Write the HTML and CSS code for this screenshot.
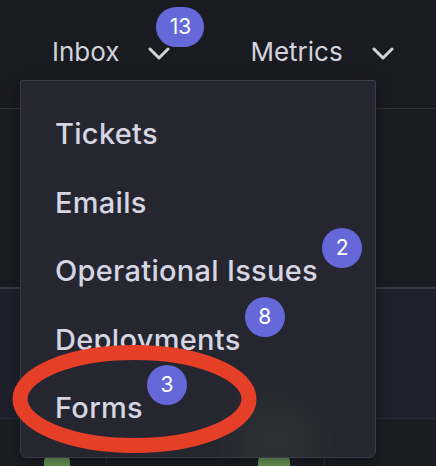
FILE: index.html
```html
<!DOCTYPE html>
<html lang="en">
  <head>
    <meta charset="UTF-8" />
    <meta name="viewport" content="width=device-width, initial-scale=1.0" />
    <title>Inbox Menu</title>
    <link rel="stylesheet" href="styles.css">
  </head>
  <body>
    <div class="page">
      <header class="topbar">
        <nav class="nav">
          <div class="nav-item">
            <span>Inbox</span>
            <span class="chevron-wrap">
              <svg class="chevron" width="22" height="14" viewBox="0 0 22 14"><path d="M2 2 L11 11 L20 2" /></svg>
              <span class="badge badge-wide">13</span>
            </span>
          </div>
          <div class="nav-item">
            <span>Metrics</span>
            <span class="chevron-wrap">
              <svg class="chevron" width="22" height="14" viewBox="0 0 22 14"><path d="M2 2 L11 11 L20 2" /></svg>
            </span>
          </div>
        </nav>
      </header>
      <section class="panel panel-top"></section>
      <section class="panel panel-mid"></section>
      <section class="chart-row">
        <div class="chart-col"><div class="bar bar-left"></div></div>
        <div class="chart-col"><div class="bar bar-right"></div></div>
        <div class="chart-col"></div>
      </section>

      <div class="dropdown">
        <ul class="menu">
          <li><span class="label">Tickets</span></li>
          <li><span class="label">Emails</span></li>
          <li><span class="label">Operational Issues<span class="badge">2</span></span></li>
          <li><span class="label">Deployments<span class="badge">8</span></span></li>
          <li><span class="label">Forms<span class="badge">3</span></span></li>
        </ul>
      </div>

      <svg class="annotation" width="436" height="466" viewBox="0 0 436 466">
        <ellipse cx="134.5" cy="399" rx="114.5" ry="46.5" />
      </svg>
    </div>
  </body>
</html>
```

FILE: styles.css
```css
body {
  margin: 0;
  padding: 0;
  background-color: #1a1a21;
  font-family: "Inter", "Noto Sans", sans-serif;
  color: #d5d5e0;
}
.page {
  position: relative;
  width: 436px;
  height: 466px;
  overflow: hidden;
}
.topbar {
  height: 108px;
  background-color: #1a1a21;
  border-bottom: 1px solid #32322e;
}
.nav {
  display: flex;
  align-items: center;
  gap: 80px;
  padding: 37px 0 0 52px;
}
.nav-item {
  display: flex;
  align-items: center;
  gap: 29px;
  font-size: 26px;
  line-height: 30px;
  color: #d3d3de;
}
.chevron-wrap {
  position: relative;
  display: flex;
  align-items: center;
  padding-top: 3px;
}
.chevron path {
  fill: none;
  stroke: #d3d3de;
  stroke-width: 3;
  stroke-linecap: round;
  stroke-linejoin: round;
}
.panel-top {
  height: 178px;
  background-color: #1b1b23;
  border-bottom: 2px solid #393a47;
}
.panel-mid {
  height: 129px;
  background-color: #1f202c;
  border-bottom: 1px solid #2b2c39;
}
.chart-row {
  display: grid;
  grid-template-columns: 107px 218px 1fr;
  height: 47px;
  background-color: #1c1c25;
}
.chart-col {
  position: relative;
  border-right: 1px solid #2d2e3a;
}
.chart-col:last-child {
  border-right: none;
}
.bar {
  position: absolute;
  bottom: 0;
  background-color: #6c9c58;
  border-radius: 8px 8px 0 0;
}
.bar-left {
  left: 44px;
  width: 26px;
  height: 12px;
}
.bar-right {
  left: 151px;
  width: 32px;
  height: 12px;
}
.dropdown {
  position: absolute;
  left: 20px;
  top: 80px;
  width: 354px;
  height: 376px;
  background: radial-gradient(circle at 255px 360px, rgba(80, 110, 60, 0.18), rgba(0, 0, 0, 0) 60px), #262631;
  border: 1px solid #3b3b4b;
  border-radius: 2px 2px 7px 7px;
  box-shadow: 0 6px 16px rgba(0, 0, 0, 0.35);
}
.menu {
  list-style: none;
  margin: 0;
  padding: 19px 0 0 34px;
}
.menu li {
  height: 68.5px;
  display: flex;
  align-items: center;
  font-size: 29px;
  font-weight: 500;
  letter-spacing: 0.3px;
  color: #d6d6e2;
}
.label {
  position: relative;
  line-height: 30px;
}
.badge {
  position: absolute;
  left: calc(100% + 4px);
  top: -28px;
  width: 40px;
  height: 40px;
  border-radius: 20px;
  background-color: #6468d8;
  color: #ffffff;
  font-size: 21px;
  font-weight: 400;
  letter-spacing: 0;
  line-height: 40px;
  text-align: center;
}
.badge-wide {
  left: 8px;
  top: -37px;
  width: 48px;
  height: 40px;
}
.annotation {
  position: absolute;
  left: 0;
  top: 0;
  pointer-events: none;
}
.annotation ellipse {
  fill: none;
  stroke: #e63f28;
  stroke-width: 15;
}
```
